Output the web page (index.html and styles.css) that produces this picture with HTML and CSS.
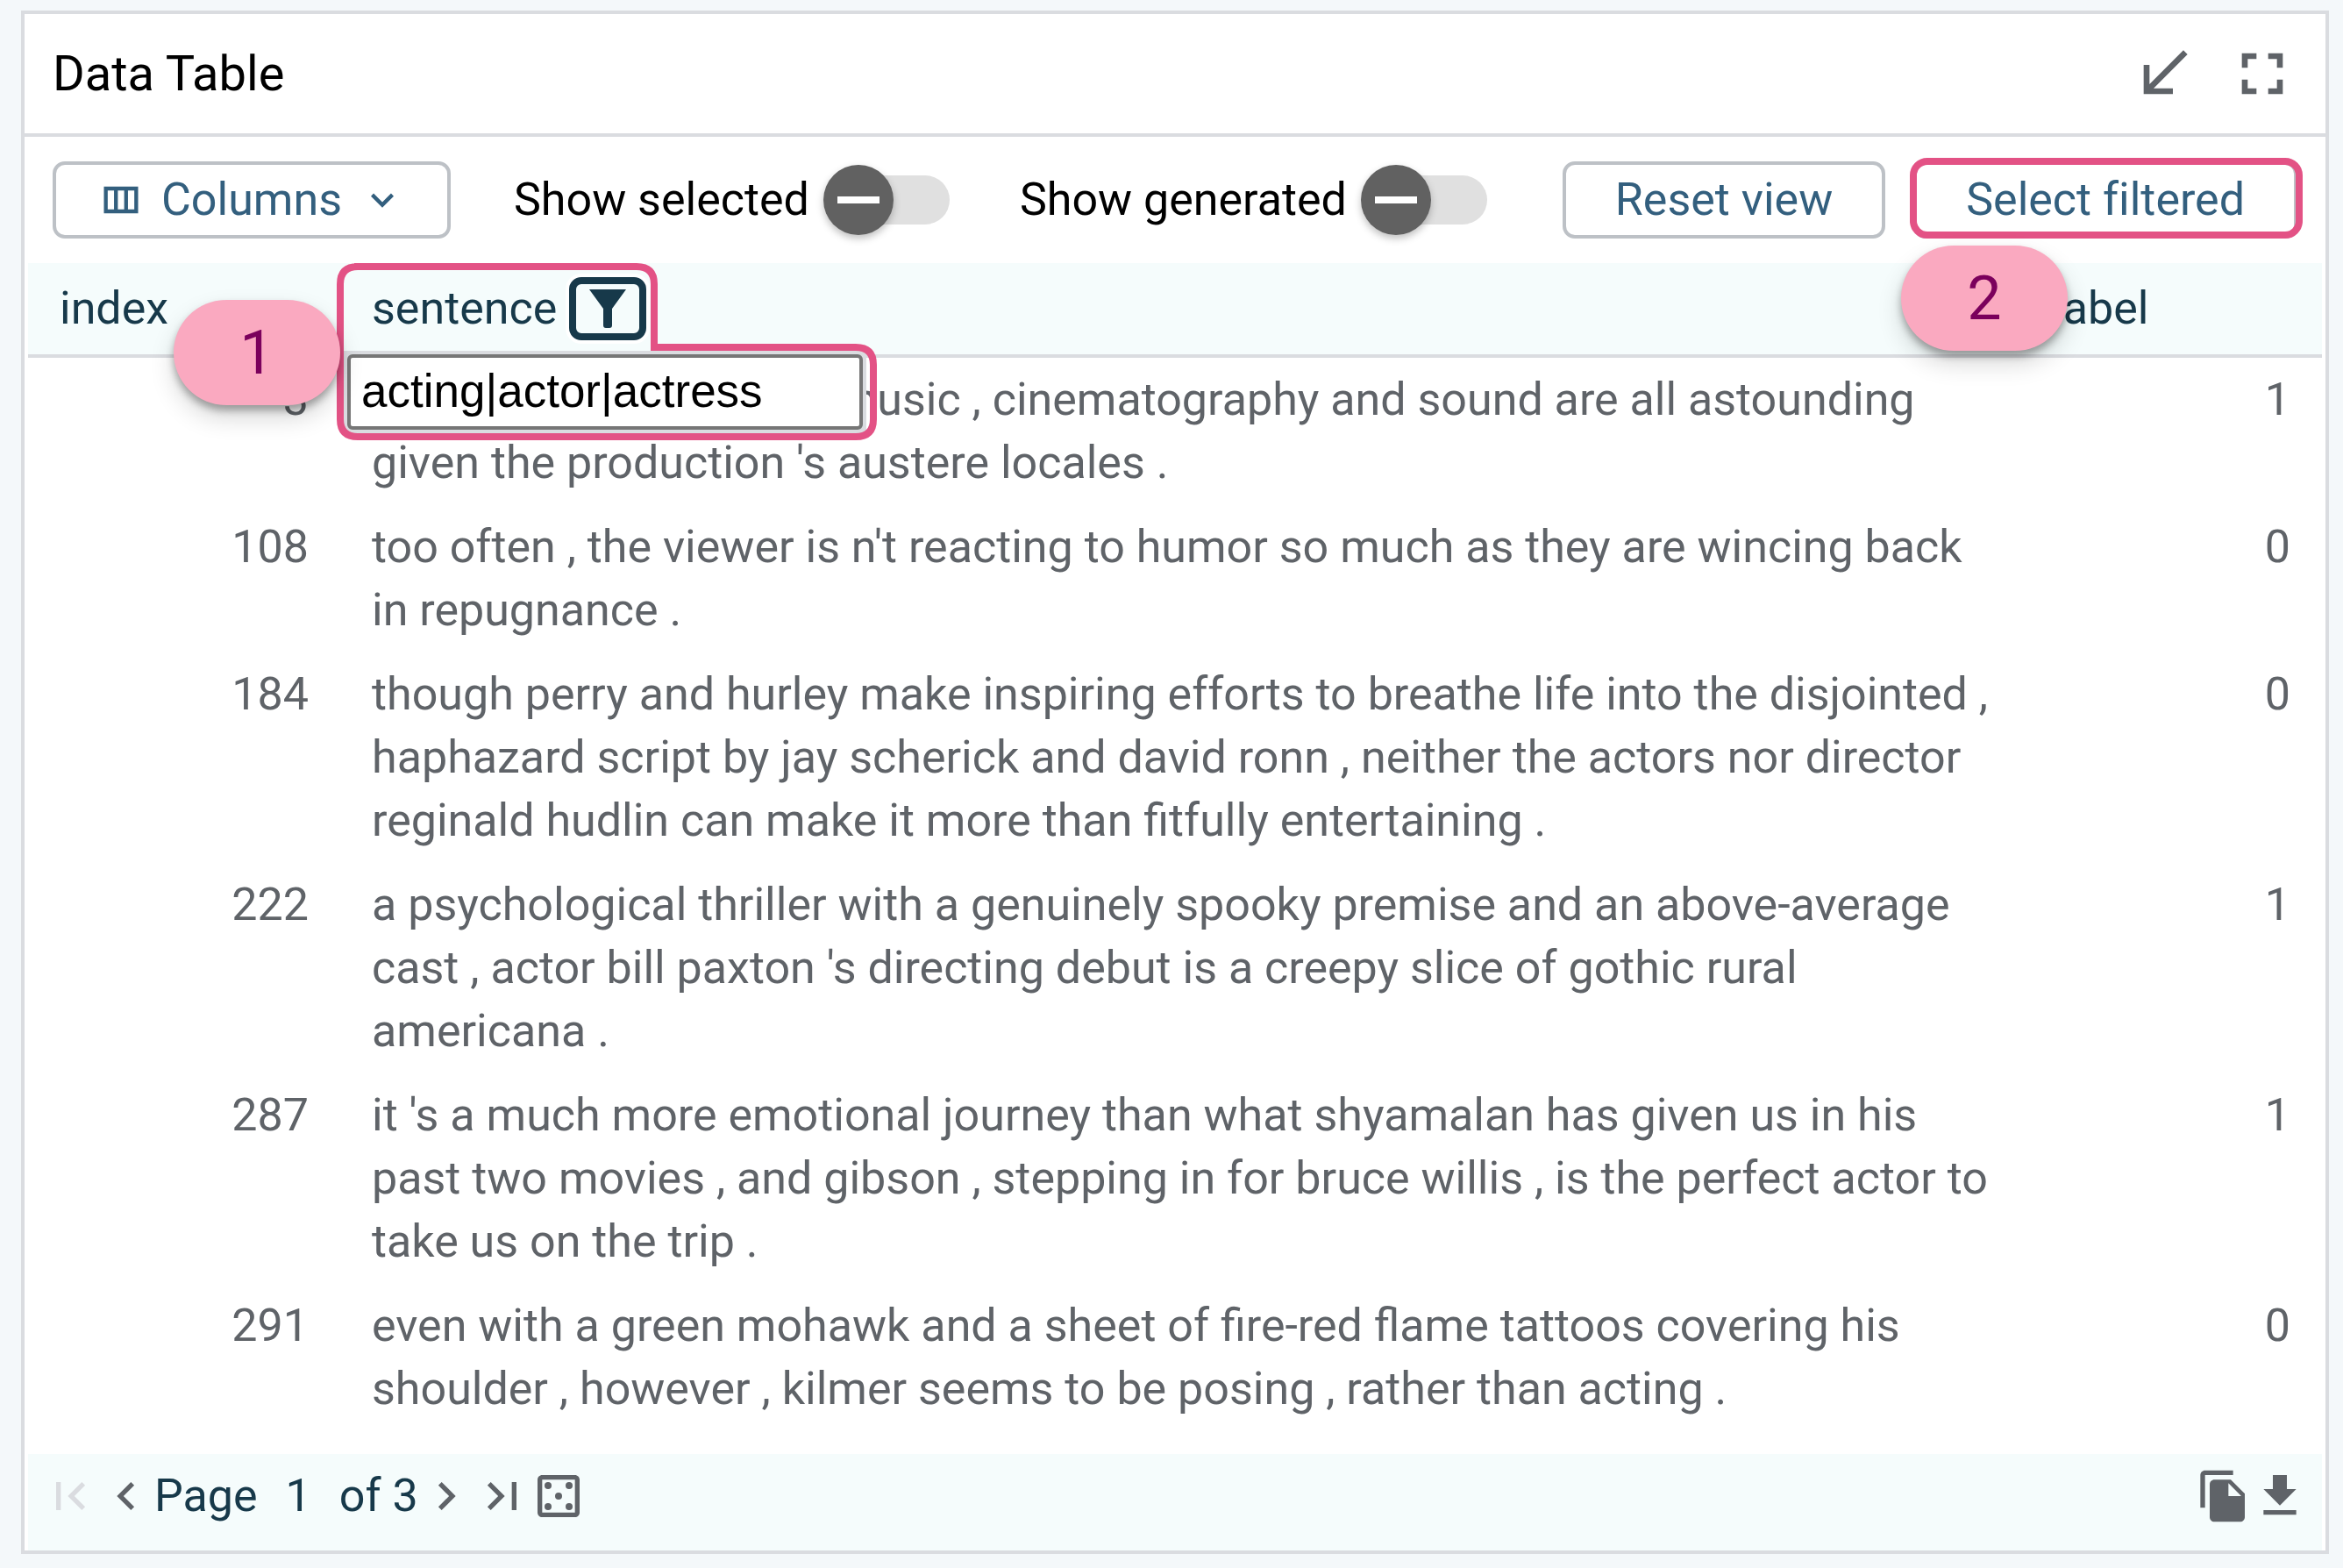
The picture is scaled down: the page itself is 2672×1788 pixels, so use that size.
FILE: index.html
```html
<!DOCTYPE html>
<html lang="en">
<head>
  <meta charset="utf-8">
  <meta name="viewport" content="width=device-width, initial-scale=1">
  <title>Data Table</title>
  <link rel="stylesheet" href="styles.css">
</head>
<body>
  <main class="module">
    <header class="module-header">
      <h1 class="module-title">Data Table</h1>
      <div class="module-actions">
        <button class="icon-button" type="button" aria-label="Minimize">
          <svg class="icon-large" viewBox="0 0 24 24"><path d="M20 5.41L18.59 4 7 15.59V9H5v10h10v-2H8.41z"/></svg>
        </button>
        <button class="icon-button" type="button" aria-label="Full screen">
          <svg class="icon-large" viewBox="0 0 24 24"><path d="M7 14H5v5h5v-2H7v-3zm-2-4h2V7h3V5H5v5zm12 7h-3v2h5v-5h-2v3zM14 5v2h3v3h2V5h-5z"/></svg>
        </button>
      </div>
    </header>

    <div class="toolbar">
      <div class="toolbar-group">
        <button class="button" type="button">
          <svg class="icon-small" viewBox="0 0 24 24"><path d="M3 5v14h18V5H3zm5.33 12H5V7h3.33v10zm5.34 0h-3.33V7h3.33v10zM19 17h-3.33V7H19v10z"/></svg>
          <span>Columns</span>
          <svg class="icon-small" viewBox="0 0 24 24"><path d="M16.59 8.59L12 13.17 7.41 8.59 6 10l6 6 6-6z"/></svg>
        </button>
        <label class="switch-label">Show selected <input class="switch" type="checkbox" role="switch"></label>
        <label class="switch-label">Show generated <input class="switch" type="checkbox" role="switch"></label>
      </div>
      <div class="toolbar-group toolbar-end">
        <button class="button button-wide" type="button">Reset view</button>
        <div class="callout-anchor">
          <button class="button button-wide" type="button">Select filtered</button>
          <span class="callout-box"></span>
        </div>
      </div>
    </div>

    <div class="table-area">
      <table class="data-table">
        <colgroup>
          <col class="col-index">
          <col>
          <col class="col-label">
        </colgroup>
        <thead>
          <tr>
            <th scope="col">index</th>
            <th scope="col">
              <div class="filter-heading">
                <span>sentence</span>
                <button class="filter-button" type="button" aria-label="Filter sentence">
                  <svg class="filter-icon" viewBox="0 0 42 44"><path d="M0 0H42L26 22V41Q26 44 23 44H19Q16 44 16 41V22Z"/></svg>
                </button>
              </div>
              <div class="filter-popup">
                <input class="filter-input" type="text" aria-label="Filter text for sentence" value="acting|actor|actress">
              </div>
              <svg class="callout-outline" viewBox="0 0 616 202"><path d="M20 4H342Q362 4 362 24V96H592Q612 96 612 116V178Q612 198 592 198H24Q4 198 4 178V24Q4 4 24 4Z"/></svg>
              <span class="badge badge-one">1</span>
            </th>
            <th scope="col">label<span class="badge badge-two">2</span></th>
          </tr>
        </thead>
        <tbody>
          <tr><td class="number">3</td><td>the acting , costumes , music , cinematography and sound are all astounding given the production 's austere locales .</td><td class="number">1</td></tr>
          <tr><td class="number">108</td><td>too often , the viewer is n't reacting to humor so much as they are wincing back in repugnance .</td><td class="number">0</td></tr>
          <tr><td class="number">184</td><td>though perry and hurley make inspiring efforts to breathe life into the disjointed , haphazard script by jay scherick and david ronn , neither the actors nor director reginald hudlin can make it more than fitfully entertaining .</td><td class="number">0</td></tr>
          <tr><td class="number">222</td><td>a psychological thriller with a genuinely spooky premise and an above-average cast , actor bill paxton 's directing debut is a creepy slice of gothic rural americana .</td><td class="number">1</td></tr>
          <tr><td class="number">287</td><td>it 's a much more emotional journey than what shyamalan has given us in his past two movies , and gibson , stepping in for bruce willis , is the perfect actor to take us on the trip .</td><td class="number">1</td></tr>
          <tr><td class="number">291</td><td>even with a green mohawk and a sheet of fire-red flame tattoos covering his shoulder , however , kilmer seems to be posing , rather than acting .</td><td class="number">0</td></tr>
        </tbody>
      </table>

      <footer class="table-footer">
        <nav class="pager" aria-label="Pages">
          <button class="icon-button" type="button" aria-label="First page" disabled>
            <svg class="icon" viewBox="0 0 24 24"><path d="M18.41 16.59L13.82 12l4.59-4.59L17 6l-6 6 6 6zM6 6h2v12H6z"/></svg>
          </button>
          <button class="icon-button" type="button" aria-label="Previous page">
            <svg class="icon" viewBox="0 0 24 24"><path d="M15.41 7.41L14 6l-6 6 6 6 1.41-1.41L10.83 12z"/></svg>
          </button>
          <span>Page</span>
          <span class="page-current">1</span>
          <span>of 3</span>
          <button class="icon-button" type="button" aria-label="Next page">
            <svg class="icon" viewBox="0 0 24 24"><path d="M10 6L8.59 7.41 13.17 12l-4.58 4.59L10 18l6-6z"/></svg>
          </button>
          <button class="icon-button" type="button" aria-label="Last page">
            <svg class="icon" viewBox="0 0 24 24"><path d="M5.59 7.41L10.18 12l-4.59 4.59L7 18l6-6-6-6zM16 6h2v12h-2z"/></svg>
          </button>
          <button class="icon-button" type="button" aria-label="Random page">
            <svg class="icon" viewBox="0 0 24 24"><path d="M19 3H5c-1.1 0-2 .9-2 2v14c0 1.1.9 2 2 2h14c1.1 0 2-.9 2-2V5c0-1.1-.9-2-2-2zm0 16H5V5h14v14z"/><circle cx="7.5" cy="7.5" r="1.5"/><circle cx="16.5" cy="7.5" r="1.5"/><circle cx="12" cy="12" r="1.5"/><circle cx="7.5" cy="16.5" r="1.5"/><circle cx="16.5" cy="16.5" r="1.5"/></svg>
          </button>
        </nav>
        <div class="export">
          <button class="icon-button" type="button" aria-label="Copy">
            <svg class="icon" viewBox="0 0 24 24"><path d="M16 1H4c-1.1 0-2 .9-2 2v14h2V3h12V1zm-1 4l6 6v10c0 1.1-.9 2-2 2H7.99C6.89 23 6 22.1 6 21l.01-14c0-1.1.89-2 1.99-2h7zm-1 7h5.5L14 6.5V12z"/></svg>
          </button>
          <button class="icon-button" type="button" aria-label="Download">
            <svg class="icon" viewBox="0 0 24 24"><path d="M19 9h-4V3H9v6H5l7 7 7-7zM5 18v2h14v-2H5z"/></svg>
          </button>
        </div>
      </footer>
    </div>
  </main>
</body>
</html>
```

FILE: styles.css
```css
:root {
  --line: #dadce0;
  --tint: #f5fcfc;
  --ink: #17394a;
  --muted: #5f6368;
  --action: #335f7e;
  --pink: #e35285;
}

* {
  box-sizing: border-box;
}

body {
  margin: 0;
  min-height: 100vh;
  padding: 12px 16px 16px 24px;
  display: flex;
  flex-direction: column;
  background: #f4f8fa;
  color: #000;
  font-family: Roboto, "Liberation Sans", sans-serif;
  font-size: 52px;
  line-height: 72px;
}

button,
input {
  font: inherit;
  margin: 0;
}

svg {
  display: block;
  fill: currentColor;
}

.module {
  flex: 1;
  display: flex;
  flex-direction: column;
  background: #fff;
  border: 4px solid var(--line);
}

.module-header {
  display: flex;
  align-items: center;
  justify-content: space-between;
  padding: 28px 32px;
  border-bottom: 4px solid var(--line);
}

.module-title {
  margin: 0;
  font-size: 56px;
  font-weight: 400;
}

.module-actions {
  display: flex;
  gap: 32px;
}

.icon-button {
  padding: 0;
  border: 0;
  background: none;
  color: var(--muted);
}

.icon-button:disabled {
  color: var(--line);
}

.icon-small {
  width: 52px;
  height: 52px;
}

.icon {
  width: 64px;
  height: 64px;
}

.icon-large {
  width: 80px;
  height: 80px;
}

.toolbar {
  display: flex;
  align-items: center;
  justify-content: space-between;
  padding: 28px 32px;
}

.toolbar-group {
  display: flex;
  align-items: center;
  gap: 72px;
}

.toolbar-end {
  gap: 32px;
}

.button {
  display: flex;
  align-items: center;
  gap: 20px;
  height: 88px;
  padding: 0 48px;
  border: 4px solid #bdc1c6;
  border-radius: 14px;
  background: #fff;
  color: var(--action);
  font-variant-ligatures: none;
  white-space: nowrap;
}

.button-wide {
  padding: 0 56px;
}

.switch-label {
  display: flex;
  align-items: center;
  gap: 16px;
  white-space: nowrap;
}

.switch-label + .switch-label {
  margin-left: 8px;
}

.switch {
  appearance: none;
  position: relative;
  width: 144px;
  height: 80px;
}

.switch::before {
  content: "";
  position: absolute;
  inset: 12px 0 12px 16px;
  border-radius: 28px;
  background: #e0e0e0;
}

.switch::after {
  content: "";
  position: absolute;
  inset: 0 auto 0 0;
  width: 80px;
  border-radius: 50%;
  background: linear-gradient(#fff, #fff) center / 48px 8px no-repeat #616161;
  box-shadow: 0 4px 8px rgba(0, 0, 0, 0.25);
}

.callout-anchor {
  position: relative;
}

.callout-box {
  position: absolute;
  inset: -4px -6px 0 -4px;
  border: 8px solid var(--pink);
  border-radius: 20px;
  pointer-events: none;
}

.table-area {
  flex: 1;
  display: flex;
  flex-direction: column;
  justify-content: space-between;
  padding: 0 4px;
}

.data-table {
  width: 100%;
  table-layout: fixed;
  border-collapse: separate;
  border-spacing: 0;
}

.col-index {
  width: 356px;
}

.col-label {
  width: 344px;
}

.data-table th {
  position: relative;
  padding: 16px 36px;
  background: var(--tint);
  border-bottom: 4px solid var(--line);
  color: var(--ink);
  font-weight: 400;
  text-align: left;
}

.data-table td {
  padding: 12px 36px;
  color: var(--muted);
  vertical-align: top;
}

.data-table .number {
  text-align: right;
}

.filter-heading {
  display: flex;
  align-items: center;
  gap: 14px;
}

.filter-button {
  display: flex;
  align-items: center;
  justify-content: center;
  width: 88px;
  height: 72px;
  padding: 0;
  border: 8px solid var(--ink);
  border-radius: 14px;
  background: var(--tint);
  box-shadow: 0 0 0 4px #fff;
  color: var(--ink);
}

.filter-icon {
  width: 42px;
  height: 44px;
}

.filter-popup {
  position: absolute;
  top: 100px;
  left: 4px;
  width: 596px;
  padding: 0 4px;
  border: solid var(--line);
  border-width: 4px 0;
  background: var(--line);
}

.filter-input {
  display: block;
  width: 100%;
  height: 86px;
  padding: 0 12px 4px;
  border: 4px solid #767676;
  border-radius: 6px;
  background: #fff;
  color: #000;
  font-family: "Liberation Sans", Arial, sans-serif;
  font-size: 53px;
}

.callout-outline {
  position: absolute;
  top: 0;
  left: -4px;
  width: 616px;
  height: 202px;
  fill: none;
  stroke: var(--pink);
  stroke-width: 8px;
  pointer-events: none;
}

.badge {
  position: absolute;
  width: 190px;
  border-radius: 60px;
  background: #faa9c0;
  box-shadow: 0 6px 8px rgba(0, 0, 0, 0.3), 0 14px 28px rgba(0, 0, 0, 0.16);
  color: #7b005c;
  font-size: 70px;
  line-height: 120px;
  text-align: center;
}

.badge-one {
  top: 42px;
  left: -190px;
}

.badge-two {
  top: -20px;
  left: -136px;
}

.table-footer {
  display: flex;
  justify-content: space-between;
  padding: 16px 16px 30px;
  background: var(--tint);
  color: var(--ink);
}

.pager,
.export {
  display: flex;
  align-items: center;
  height: 64px;
}

.page-current {
  padding: 0 32px;
}
```
